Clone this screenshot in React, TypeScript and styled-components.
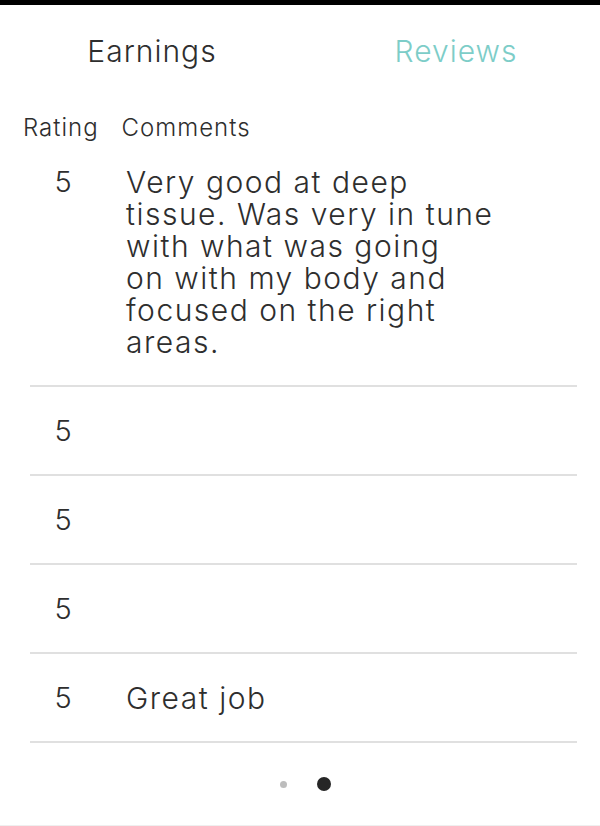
import React from 'react';
import styled, { createGlobalStyle } from 'styled-components';

const GlobalStyle = createGlobalStyle`
    html, body {
        margin:0;
        padding:0;
        background:#fff;
    }
    body {
        font-family:Inter, "Open Sans", "Liberation Sans", sans-serif;
        color:#2e2e2e;
    }
`;

const Page = styled.div`
    width:600px;
    height:826px;
    box-sizing:border-box;
    display:flex;
    flex-direction:column;
    border-top:5px solid #000;
    border-bottom:1px solid #efefef;
    overflow:hidden;
`;

const Tabs = styled.nav`
    display:grid;
    grid-template-columns:1fr 1fr;
    column-gap:16px;
    padding-left:8px;
    height:88px;
    align-items:center;
`;

const Tab = styled.div<{ $active?: boolean }>`
    text-align:center;
    font-size:30px;
    font-weight:300;
    letter-spacing:1px;
    padding-top:3px;
    color:${p => p.$active ? '#7dcdc8' : '#2e2e2e'};
`;

const HeadRow = styled.div`
    display:flex;
    gap:23px;
    padding:20px 0 0 23px;
    height:45px;
    box-sizing:border-box;
    font-size:24px;
    font-weight:300;
    letter-spacing:1px;
`;

const Row = styled.div`
    display:grid;
    grid-template-columns:66px 1fr;
    column-gap:30px;
    align-items:start;
    margin:0 23px 0 30px;
    padding:28px 0 27px;
    border-bottom:2px solid #e0e0e0;
    font-size:29px;
    font-weight:300;
    line-height:32px;
`;

const Score = styled.div`
    text-align:center;
`;

const Comment = styled.div`
    min-height:32px;
    font-size:30px;
    letter-spacing:1.5px;
    white-space:pre-line;
`;

const Dots = styled.div`
    flex:1;
    display:flex;
    justify-content:center;
    align-items:center;
    gap:30px;
    padding-left:11px;
`;

const Dot = styled.span<{ $on?: boolean }>`
    width:${p => p.$on ? 14 : 7}px;
    height:${p => p.$on ? 14 : 7}px;
    border-radius:50%;
    background:${p => p.$on ? '#262626' : '#bdbdbd'};
`;

const reviews = [
    { rating: 5, text: 'Very good at deep\ntissue. Was very in tune\nwith what was going\non with my body and\nfocused on the right\nareas.' },
    { rating: 5, text: '' },
    { rating: 5, text: '' },
    { rating: 5, text: '' },
    { rating: 5, text: 'Great job' },
];

const App = () => {
    return (
        <>
            <GlobalStyle />
            <Page>
                <Tabs>
                    <Tab>Earnings</Tab>
                    <Tab $active>Reviews</Tab>
                </Tabs>
                <HeadRow>
                    <span>Rating</span>
                    <span>Comments</span>
                </HeadRow>
                {reviews.map((r, i) => (
                    <Row key={i}>
                        <Score>{r.rating}</Score>
                        <Comment>{r.text}</Comment>
                    </Row>
                ))}
                <Dots>
                    <Dot />
                    <Dot $on />
                </Dots>
            </Page>
        </>
    );
};

export default App;
